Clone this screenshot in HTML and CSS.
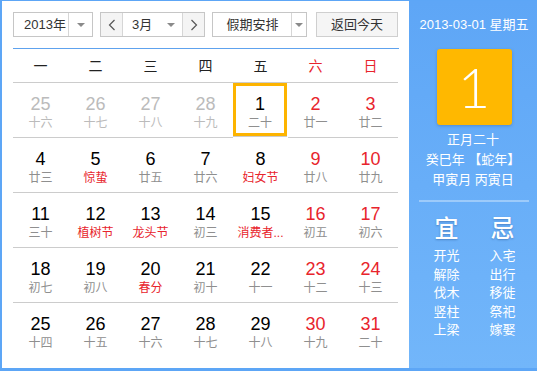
FILE: index.html
```html
<!DOCTYPE html>
<html lang="zh-CN">
<head>
<meta charset="utf-8">
<title>万年历</title>
<link rel="stylesheet" href="styles.css">
</head>
<body>
<div class="cal">
  <div class="main">
    <div class="toolbar">
      <div class="select year">
        <span class="sel-text">2013年</span>
        <span class="sel-arrow"><i class="tri"></i></span>
      </div>
      <div class="select month">
        <span class="nav prev"><svg width="8" height="12" viewBox="0 0 8 12"><path d="M6.5 1 L1.5 6 L6.5 11" fill="none" stroke="#555" stroke-width="1.2"/></svg></span>
        <span class="sel-text m-text">3月<i class="tri"></i></span>
        <span class="nav next"><svg width="8" height="12" viewBox="0 0 8 12"><path d="M1.5 1 L6.5 6 L1.5 11" fill="none" stroke="#555" stroke-width="1.2"/></svg></span>
      </div>
      <div class="select holiday">
        <span class="sel-text">假期安排</span>
        <span class="sel-arrow small"><i class="tri"></i></span>
      </div>
      <div class="btn-today">返回今天</div>
    </div>

    <div class="grid">
      <div class="wk">一</div><div class="wk">二</div><div class="wk">三</div><div class="wk">四</div><div class="wk">五</div><div class="wk red">六</div><div class="wk red">日</div>

      <div class="cell other"><b>25</b><span>十六</span></div>
      <div class="cell other"><b>26</b><span>十七</span></div>
      <div class="cell other"><b>27</b><span>十八</span></div>
      <div class="cell other"><b>28</b><span>十九</span></div>
      <div class="cell today"><b>1</b><span>二十</span></div>
      <div class="cell we"><b>2</b><span>廿一</span></div>
      <div class="cell we"><b>3</b><span>廿二</span></div>

      <div class="cell"><b>4</b><span>廿三</span></div>
      <div class="cell"><b>5</b><span class="fest">惊蛰</span></div>
      <div class="cell"><b>6</b><span>廿五</span></div>
      <div class="cell"><b>7</b><span>廿六</span></div>
      <div class="cell"><b>8</b><span class="fest">妇女节</span></div>
      <div class="cell we"><b>9</b><span>廿八</span></div>
      <div class="cell we"><b>10</b><span>廿九</span></div>

      <div class="cell"><b>11</b><span>三十</span></div>
      <div class="cell"><b>12</b><span class="fest">植树节</span></div>
      <div class="cell"><b>13</b><span class="fest">龙头节</span></div>
      <div class="cell"><b>14</b><span>初三</span></div>
      <div class="cell"><b>15</b><span class="fest">消费者...</span></div>
      <div class="cell we"><b>16</b><span>初五</span></div>
      <div class="cell we"><b>17</b><span>初六</span></div>

      <div class="cell"><b>18</b><span>初七</span></div>
      <div class="cell"><b>19</b><span>初八</span></div>
      <div class="cell"><b>20</b><span class="fest">春分</span></div>
      <div class="cell"><b>21</b><span>初十</span></div>
      <div class="cell"><b>22</b><span>十一</span></div>
      <div class="cell we"><b>23</b><span>十二</span></div>
      <div class="cell we"><b>24</b><span>十三</span></div>

      <div class="cell last"><b>25</b><span>十四</span></div>
      <div class="cell last"><b>26</b><span>十五</span></div>
      <div class="cell last"><b>27</b><span>十六</span></div>
      <div class="cell last"><b>28</b><span>十七</span></div>
      <div class="cell last"><b>29</b><span>十八</span></div>
      <div class="cell last we"><b>30</b><span>十九</span></div>
      <div class="cell last we"><b>31</b><span>二十</span></div>
    </div>
  </div>

  <div class="side">
    <div class="side-date">2013-03-01 星期五</div>
    <div class="big-day">1</div>
    <div class="lunar-lines">
      <div>正月二十</div>
      <div>癸巳年 【蛇年】</div>
      <div>甲寅月 丙寅日</div>
    </div>
    <div class="sep"></div>
    <div class="yiji">
      <div class="col">
        <div class="yj-title">宜</div>
        <div>开光</div><div>解除</div><div>伐木</div><div>竖柱</div><div>上梁</div>
      </div>
      <div class="col">
        <div class="yj-title">忌</div>
        <div>入宅</div><div>出行</div><div>移徙</div><div>祭祀</div><div>嫁娶</div>
      </div>
    </div>
  </div>
</div>
</body>
</html>
```

FILE: styles.css
```css
* { box-sizing: border-box; }
html, body { margin: 0; padding: 0; background: #fff; }
body {
  font-family: "Liberation Sans", "Noto Sans CJK SC", sans-serif;
  color: #333;
}
.cal {
  display: flex;
  width: 537px;
  height: 371px;
  border-style: solid;
  border-color: #5da6f6;
  border-width: 1px 0 3px 2px;
}
.main {
  width: 407px;
  padding: 11px 11px 0 11px;
  background: #fff;
}
.toolbar {
  display: flex;
  height: 25px;
  margin-bottom: 11px;
  font-size: 13px;
}
.select {
  display: flex;
  border: 1px solid #c6c6c6;
  background: #fff;
  height: 25px;
}
.sel-text {
  display: flex;
  align-items: center;
  line-height: 23px;
}
.sel-arrow {
  display: flex;
  align-items: center;
  justify-content: center;
  border-left: 1px solid #d6d6d6;
}
.tri {
  display: block;
  width: 0;
  height: 0;
  border-left: 4px solid transparent;
  border-right: 4px solid transparent;
  border-top: 4px solid #8a8a8a;
}
.year { width: 80px; }
.year .sel-text { width: 55px; padding-left: 10px; }
.year .sel-arrow { width: 24px; }
.month { width: 105px; margin-left: 7px; }
.nav {
  width: 22px;
  display: flex;
  align-items: center;
  justify-content: center;
  background: #f4f4f4;
}
.prev { border-right: 1px solid #d6d6d6; }
.next { border-left: 1px solid #d6d6d6; }
.m-text {
  width: 59px;
  padding-left: 9px;
  justify-content: space-between;
  padding-right: 7px;
}
.holiday { width: 95px; margin-left: 7px; }
.holiday .sel-text { width: 78px; justify-content: center; padding-left: 1px; }
.holiday .sel-arrow { width: 15px; }
.btn-today {
  width: 82px;
  margin-left: 9px;
  border: 1px solid #cfcfcf;
  background: #f5f5f5;
  text-align: center;
  line-height: 23px;
  height: 25px;
}
.grid {
  display: grid;
  grid-template-columns: repeat(7, 55px);
  border-top: 1px solid #5ea2ee;
  width: 386px;
}
.wk {
  height: 34px;
  line-height: 34px;
  text-align: center;
  font-size: 14px;
  color: #222;
  border-bottom: 1px solid #cccccc;
}
.wk.red { color: #e8242c; }
.cell {
  height: 55px;
  border-bottom: 1px solid #cccccc;
  display: flex;
  flex-direction: column;
  align-items: center;
  padding-top: 11px;
}
.cell.last { border-bottom: none; }
.cell b {
  font-weight: normal;
  font-size: 18px;
  line-height: 20px;
  color: #000;
}
.cell span {
  font-size: 12px;
  line-height: 16px;
  margin-top: 1px;
  color: #8f8f8f;
  white-space: nowrap;
}
.cell.other b, .cell.other span { color: #bbbbbb; }
.cell.we b { color: #e8242c; }
.cell span.fest { color: #e8242c; }
.cell.today {
  width: 54px;
  height: 54px;
  box-shadow: inset 0 0 0 3px #fdb400;
  border-bottom: 1px solid #cccccc;
}
.side {
  flex: 1;
  background: linear-gradient(#5ea6f6, #72b6fa);
  color: #fff;
  display: flex;
  flex-direction: column;
  align-items: center;
  padding-top: 15px;
  font-size: 13px;
}
.side-date {
  line-height: 18px;
  font-size: 13px;
  padding-left: 2px;
}
.big-day {
  margin-top: 15px;
  width: 75px;
  height: 76px;
  background: #ffb800;
  border-radius: 3px;
  box-shadow: 0 1px 3px rgba(40, 80, 140, 0.35);
  text-align: center;
  font-family: "Lato", "Open Sans", sans-serif;
  font-weight: 300;
  font-size: 56px;
  line-height: 76px;
  margin-left: 2px;
}
.lunar-lines {
  margin-top: 5px;
  text-align: center;
  line-height: 20px;
}
.sep {
  margin-top: 10px;
  width: 110px;
  height: 2px;
  background: rgba(255, 255, 255, 0.35);
  margin-left: 2px;
}
.yiji {
  display: grid;
  grid-template-columns: 56px 56px;
  margin-top: 13px;
  padding-left: 3px;
}
.col {
  display: flex;
  flex-direction: column;
  align-items: center;
  line-height: 18.5px;
}
.yj-title {
  font-size: 24px;
  line-height: 28px;
  margin-bottom: 4px;
  font-weight: 500;
  text-shadow: 0 1px 2px rgba(40, 80, 140, 0.45);
}
```
